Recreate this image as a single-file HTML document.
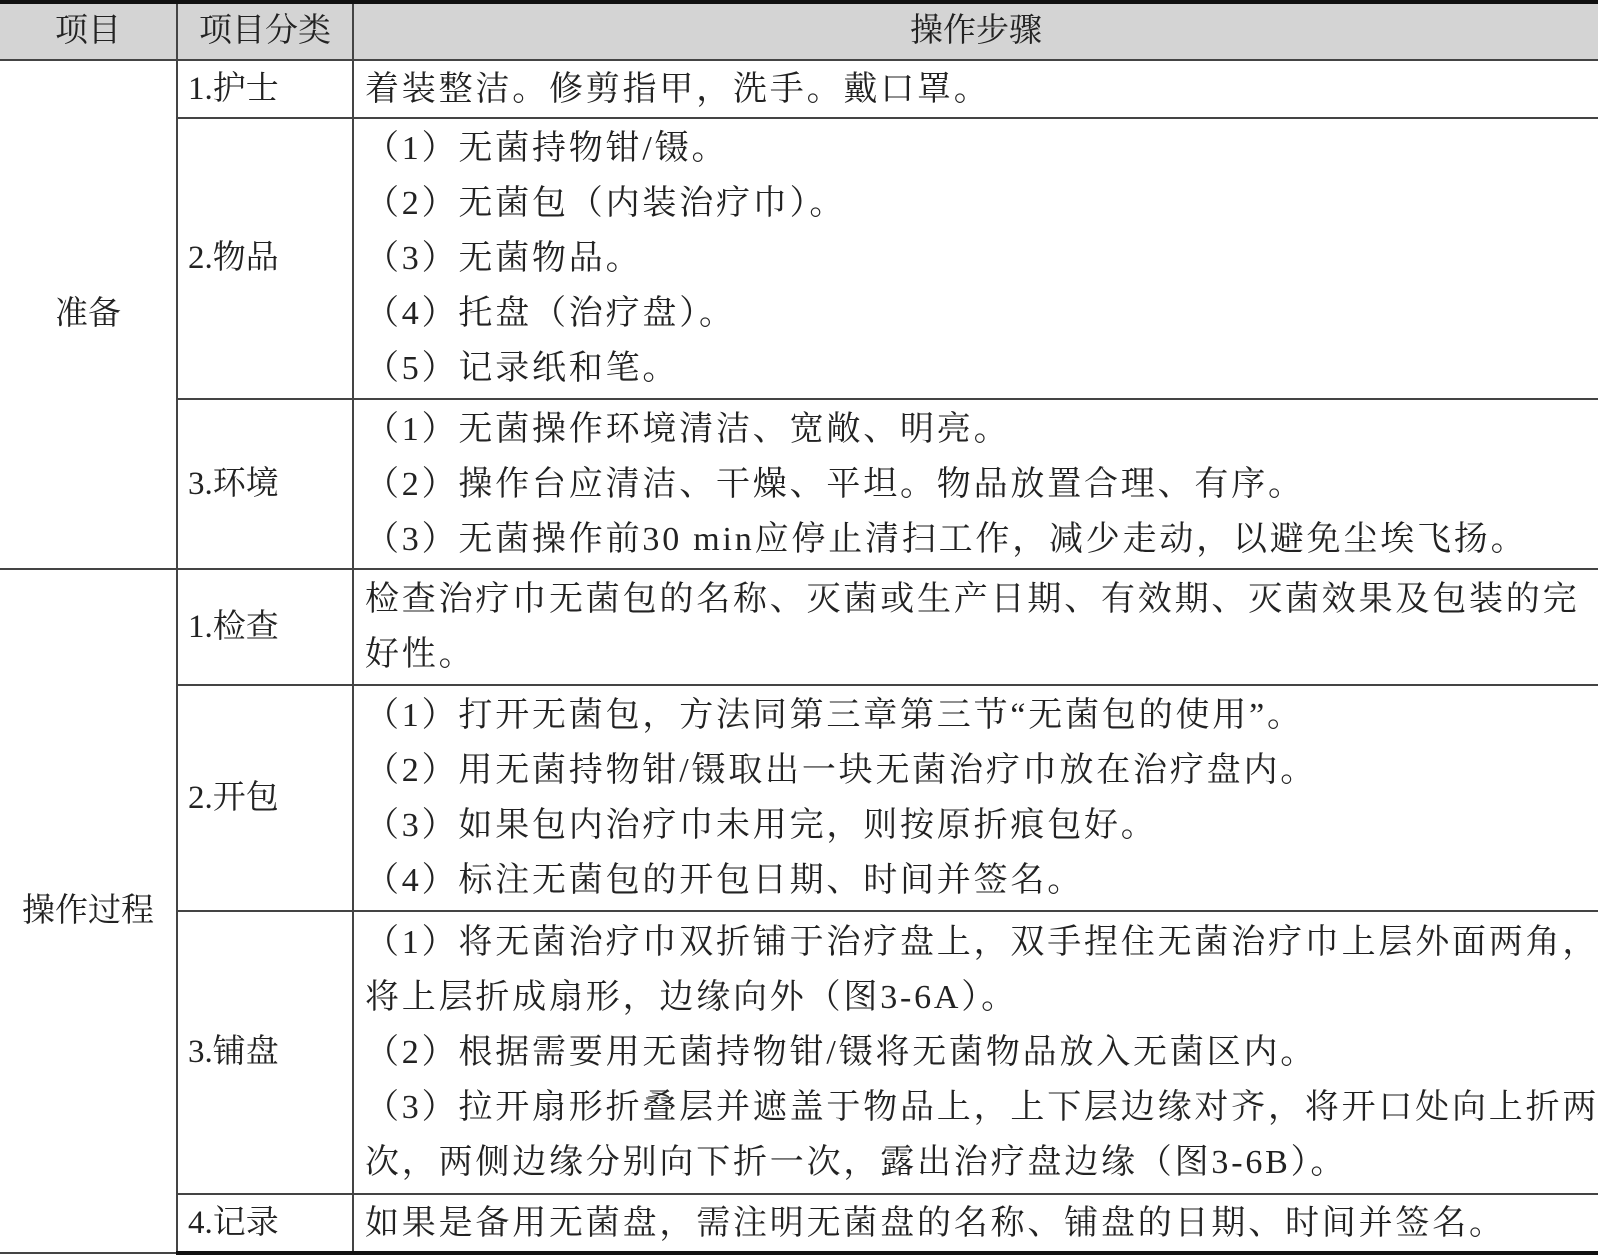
<!DOCTYPE html>
<html><head><meta charset="utf-8"><style>
body{margin:0;background:#fff;width:1601px;height:1258px;overflow:hidden}
table{position:absolute;left:0;top:0;width:1598px;border-collapse:collapse;table-layout:fixed;font-family:"Liberation Serif","Noto Serif CJK SC",serif;font-size:33px;color:#222}
td,th{border:2px solid #444;padding:0;vertical-align:middle;line-height:55px;font-weight:normal}
tr:first-child th{border-top:4px solid #111;background:#d4d4d4;height:55px;text-align:center}
tr:last-child td{border-bottom:4px solid #111}
td:first-child,th:first-child{border-left:none}
td:last-child,th:last-child{border-right:none}
.a{text-align:center}
.b{padding-left:10px}
.c{padding-left:11px;letter-spacing:2.8px;font-size:34px;white-space:nowrap;overflow:hidden}
</style></head><body>
<table>
<colgroup><col style="width:177px"><col style="width:176px"><col></colgroup>
<tr><th class="a">项目</th><th>项目分类</th><th>操作步骤</th></tr>
<tr style="height:58px"><td class="a" rowspan="3">准备</td><td class="b">1.护士</td><td class="c">着装整洁。修剪指甲，洗手。戴口罩。</td></tr>
<tr style="height:281px"><td class="b">2.物品</td><td class="c">（1）无菌持物钳/镊。<br>（2）无菌包（内装治疗巾）。<br>（3）无菌物品。<br>（4）托盘（治疗盘）。<br>（5）记录纸和笔。</td></tr>
<tr style="height:170px"><td class="b">3.环境</td><td class="c">（1）无菌操作环境清洁、宽敞、明亮。<br>（2）操作台应清洁、干燥、平坦。物品放置合理、有序。<br>（3）无菌操作前30 min应停止清扫工作，减少走动，以避免尘埃飞扬。</td></tr>
<tr style="height:116px"><td class="a" rowspan="4">操作过程</td><td class="b">1.检查</td><td class="c">检查治疗巾无菌包的名称、灭菌或生产日期、有效期、灭菌效果及包装的完<br>好性。</td></tr>
<tr style="height:226px"><td class="b">2.开包</td><td class="c">（1）打开无菌包，方法同第三章第三节“无菌包的使用”。<br>（2）用无菌持物钳/镊取出一块无菌治疗巾放在治疗盘内。<br>（3）如果包内治疗巾未用完，则按原折痕包好。<br>（4）标注无菌包的开包日期、时间并签名。</td></tr>
<tr style="height:283px"><td class="b">3.铺盘</td><td class="c">（1）将无菌治疗巾双折铺于治疗盘上，双手捏住无菌治疗巾上层外面两角，<br>将上层折成扇形，边缘向外（图3-6A）。<br>（2）根据需要用无菌持物钳/镊将无菌物品放入无菌区内。<br>（3）拉开扇形折叠层并遮盖于物品上，上下层边缘对齐，将开口处向上折两<br>次，两侧边缘分别向下折一次，露出治疗盘边缘（图3-6B）。</td></tr>
<tr style="height:59px"><td class="b">4.记录</td><td class="c">如果是备用无菌盘，需注明无菌盘的名称、铺盘的日期、时间并签名。</td></tr>
</table>
</body></html>
